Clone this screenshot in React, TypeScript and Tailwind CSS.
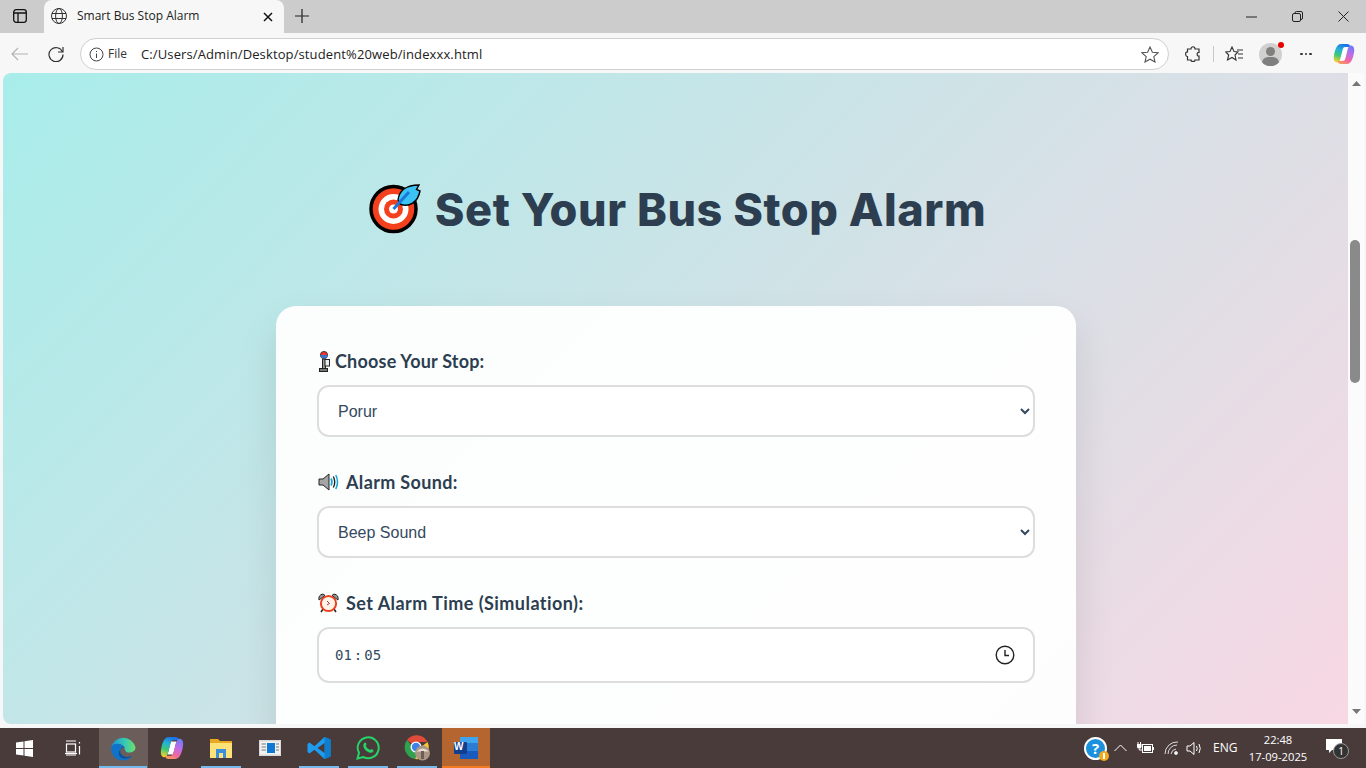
import React from "react";

const sans = "font-['Liberation_Sans',sans-serif]";
const ui = "font-['Open_Sans','Noto_Sans',sans-serif]";

function Target() {
  return (
    <svg width="52" height="52" viewBox="0 0 52 52" className="shrink-0">
      <circle cx="24.5" cy="26" r="22.5" fill="#f4401c" stroke="#000" strokeWidth="3.5" />
      <circle cx="24.5" cy="26" r="15" fill="#fff" />
      <circle cx="24.5" cy="26" r="9.5" fill="#f4401c" />
      <circle cx="24.5" cy="26" r="4.5" fill="#fff" />
      <path d="M29 17 C30 8 37 2 50 2 L47.5 6.5 L51 8 C49 19 40 25 31 21 Z" fill="#3cc3f5" stroke="#000" strokeWidth="1.4" />
      <path d="M24.5 26 L40 9" stroke="#1a78d8" strokeWidth="3" />
    </svg>
  );
}

function Pole() {
  return (
    <svg width="12" height="21" viewBox="0 0 12 21" className="shrink-0">
      <rect x="4.5" y="8" width="3" height="10" fill="#999" stroke="#222" strokeWidth="1" />
      <rect x="7" y="8.5" width="4.5" height="6.5" fill="#eee" stroke="#222" strokeWidth="1" />
      <rect x="1.5" y="17.5" width="8" height="3" fill="#777" stroke="#222" strokeWidth="1" />
      <circle cx="6" cy="4" r="3.6" fill="#e33" stroke="#222" strokeWidth="0.8" />
      <path d="M2.5 4 h7 a3.5 3.5 0 0 1 -7 0" fill="#37c" />
    </svg>
  );
}

function Speaker() {
  return (
    <svg width="21" height="18" viewBox="0 0 21 18" className="shrink-0">
      <path d="M1 6 H5 L11 1 V17 L5 12 H1 Z" fill="#a5a5a5" stroke="#222" strokeWidth="1" />
      <path d="M13 5.5 Q15 9 13 12.5" fill="none" stroke="#12a5d8" strokeWidth="1.6" />
      <path d="M15.3 3.5 Q18.2 9 15.3 14.5" fill="none" stroke="#222" strokeWidth="1.4" />
      <path d="M17.8 2 Q21.2 9 17.8 16" fill="none" stroke="#12a5d8" strokeWidth="1.5" />
    </svg>
  );
}

function AlarmClock() {
  return (
    <svg width="21" height="20" viewBox="0 0 21 20" className="shrink-0">
      <path d="M1 7 Q0 2 5 1 L7 2.5 Z" fill="#999" stroke="#222" strokeWidth="1" />
      <path d="M20 7 Q21 2 16 1 L14 2.5 Z" fill="#999" stroke="#222" strokeWidth="1" />
      <path d="M5 16 L3 19 M16 16 L18 19" stroke="#222" strokeWidth="1.5" />
      <circle cx="10.5" cy="10.5" r="7.6" fill="#fff4ea" stroke="#e8431f" strokeWidth="2" />
      <path d="M9 8 L11.5 10.5 L9 12" fill="none" stroke="#b33" strokeWidth="1" />
    </svg>
  );
}

function Copilot({ size, id }: { size: number; id: string }) {
  return (
    <svg width={size} height={size} viewBox="0 0 22 22">
      <defs>
        <linearGradient id={`${id}a`} x1="0.6" y1="0" x2="0.3" y2="1">
          <stop offset="0" stopColor="#1c70e6" />
          <stop offset="0.35" stopColor="#22b4d6" />
          <stop offset="0.65" stopColor="#3cc878" />
          <stop offset="1" stopColor="#f6d32a" />
        </linearGradient>
        <linearGradient id={`${id}b`} x1="0.7" y1="0" x2="0.3" y2="1">
          <stop offset="0" stopColor="#6f7cf5" />
          <stop offset="0.4" stopColor="#c06ce8" />
          <stop offset="0.75" stopColor="#f2679f" />
          <stop offset="1" stopColor="#f9985a" />
        </linearGradient>
      </defs>
      <path d="M10 5 H15 L12 17 H7 Z" fill="#fff" />
      <path d="M8 1 H14 C16 1 17 2 17.5 4 L12 4 C10.5 4 10 5 9.5 7 L7.5 15 C7 18 5.5 20 3.5 19.5 C1.5 19 0.5 17 0.8 14 C1.5 8 3.5 1 8 1 Z" fill={`url(#${id}a)`} />
      <path d="M14 21 H8 C6 21 5 20 4.5 18 L10 18 C11.5 18 12 17 12.5 15 L14.5 7 C15 4 16.5 2 18.5 2.5 C20.5 3 21.5 5 21.2 8 C20.5 14 18.5 21 14 21 Z" fill={`url(#${id}b)`} />
    </svg>
  );
}

function Field({ icon, label, gap, track, mb, children }: { icon: React.ReactNode; label: string; gap: string; track: string; mb: string; children: React.ReactNode }) {
  return (
    <div className={mb}>
      <div className={`flex items-center h-[24px] ml-[1px] mb-[12px] ${gap}`}>
        {icon}
        <span className={`font-['Lato',sans-serif] font-bold text-[18px] text-[#2c3e50] ${track}`}>{label}</span>
      </div>
      {children}
    </div>
  );
}

function Sel({ value }: { value: string }) {
  return (
    <select
      defaultValue={value}
      className={`block w-full h-[52px] pl-[15px] border-2 border-[#dddddd] rounded-[12px] bg-white text-[16px] text-[#34495e] ${sans} [appearance:auto]`}
    >
      <option>{value}</option>
    </select>
  );
}

function TabStrip() {
  return (
    <div className="h-[33px] bg-[#cccccc] flex shrink-0">
      <div className="w-[40px] h-[31px] flex items-center justify-center">
        <svg width="14" height="14" viewBox="0 0 14 14" fill="none" stroke="#111" strokeWidth="1.3">
          <rect x="0.7" y="0.7" width="12.6" height="12.6" rx="2.5" />
          <path d="M0.7 4 H13.3 M5 4 V13" />
        </svg>
      </div>
      <div className={`relative ml-[4px] w-[240px] h-[33px] bg-[#f7f7f7] rounded-t-[8px] flex items-center pl-[7px] pb-[2px] ${ui}`}>
        <svg width="16" height="16" viewBox="0 0 16 16" fill="none" stroke="#333" strokeWidth="1">
          <circle cx="8" cy="8" r="7.5" />
          <ellipse cx="8" cy="8" rx="3.4" ry="7.5" />
          <path d="M1 5.5 H15 M1 10.5 H15" />
        </svg>
        <span className="ml-[10px] text-[12px] text-[#222]">Smart Bus Stop Alarm</span>
        <svg width="10" height="10" viewBox="0 0 10 10" stroke="#111" strokeWidth="1.5" className="absolute right-[11px] top-[12px]">
          <path d="M1 1 L9 9 M9 1 L1 9" />
        </svg>
      </div>
      <div className="w-[36px] h-[31px] flex items-center justify-center">
        <svg width="14" height="14" viewBox="0 0 14 14" stroke="#222" strokeWidth="1.2"><path d="M7 0 V14 M0 7 H14" /></svg>
      </div>
      <div className="flex-1" />
      <div className="flex items-center h-[33px]">
        <div className="w-[46px] flex justify-center"><svg width="11" height="2" viewBox="0 0 11 2" stroke="#222"><path d="M0 1 H11" /></svg></div>
        <div className="w-[46px] flex justify-center">
          <svg width="11" height="11" viewBox="0 0 11 11" fill="none" stroke="#222"><rect x="0.5" y="2.5" width="8" height="8" rx="1.5" /><path d="M3 2.5 V2 a1.5 1.5 0 0 1 1.5 -1.5 H9 a1.5 1.5 0 0 1 1.5 1.5 V7 a1.5 1.5 0 0 1 -1.5 1.5" /></svg>
        </div>
        <div className="w-[46px] flex justify-center"><svg width="11" height="11" viewBox="0 0 11 11" stroke="#222"><path d="M0.5 0.5 L10.5 10.5 M10.5 0.5 L0.5 10.5" /></svg></div>
      </div>
    </div>
  );
}

function Toolbar() {
  return (
    <div className={`h-[40px] pt-[2px] bg-[#f7f7f7] flex items-center shrink-0 ${ui}`}>
      <div className="w-[39px] flex justify-center">
        <svg width="17" height="14" viewBox="0 0 17 14" fill="none" stroke="#b4b4b4" strokeWidth="1.2"><path d="M1 7 H17 M7 1 L1 7 L7 13" /></svg>
      </div>
      <div className="w-[34px] flex justify-center">
        <svg width="16" height="16" viewBox="0 0 16 16" fill="none" stroke="#333" strokeWidth="1.2"><path d="M14.5 6 A7 7 0 1 0 15 8.5" /><path d="M15 1 V6 H10" /></svg>
      </div>
      <div className="ml-[7px] w-[1089px] h-[32px] bg-white rounded-full border border-[#d0d0d0] flex items-center pl-[8px]">
        <svg width="15" height="15" viewBox="0 0 15 15" fill="none" stroke="#444" strokeWidth="1"><circle cx="7.5" cy="7.5" r="6.5" /><path d="M7.5 6.5 V11 M7.5 4 V5" /></svg>
        <span className="ml-[4px] text-[12px] font-medium text-[#333]">File</span>
        <span className="ml-[14px] mt-[1px] text-[13px] tracking-[0.12px] text-[#222]">C:/Users/Admin/Desktop/student%20web/indexxx.html</span>
        <div className="flex-1" />
        <svg width="18" height="17" viewBox="0 0 18 17" fill="none" stroke="#555" strokeWidth="1.1" className="mr-[9px]"><path d="M9 1 L11.4 6.2 L17 6.8 L12.8 10.6 L14 16 L9 13.2 L4 16 L5.2 10.6 L1 6.8 L6.6 6.2 Z" /></svg>
      </div>
      <div className="w-[44px] pl-[4px] pr-[1px] flex justify-center">
        <svg width="16" height="16" viewBox="0 0 16 16" fill="none" stroke="#333" strokeWidth="1.2"><path d="M6 3 C6 0 10 0 10 3 H14 V6.5 C11.5 6 11.5 10.5 14 10 V14 H10 C10.5 16 5.5 16 6 14 H2.5 V10.5 C0 10.5 0 5.5 2.5 6 V3 Z" /></svg>
      </div>
      <div className="w-px h-[16px] bg-[#c8c8c8]" />
      <div className="w-[40px] flex justify-center">
        <svg width="18" height="16" viewBox="0 0 18 16" fill="none" stroke="#333" strokeWidth="1.1"><path d="M7 1 L9 5.5 L13 6 L10 9 L11 14 L7 11.5 L2.5 14 L3.7 9 L0.7 6 L5 5.5 Z" /><path d="M12 4 H18 M13 8 H18 M13 12 H18" /></svg>
      </div>
      <div className="relative w-[32px] flex justify-center">
        <div className="w-[23px] h-[23px] rounded-full bg-[#d2d0ce] overflow-hidden relative">
          <div className="absolute left-[7px] top-[4px] w-[9px] h-[9px] rounded-full bg-[#7f7f7f]" />
          <div className="absolute left-[3px] top-[14px] w-[17px] h-[12px] rounded-full bg-[#7f7f7f]" />
        </div>
        <div className="absolute right-[2px] top-[-1px] w-[6px] h-[6px] rounded-full bg-[#e60000]" />
      </div>
      <div className="w-[40px] flex justify-center gap-[2px]">
        <i className="block w-[2.5px] h-[2.5px] rounded-full bg-[#333]" />
        <i className="block w-[2.5px] h-[2.5px] rounded-full bg-[#333]" />
        <i className="block w-[2.5px] h-[2.5px] rounded-full bg-[#333]" />
      </div>
      <div className="w-[35px] flex justify-center">
        <Copilot size={22} id="cpa" />
      </div>
    </div>
  );
}

function Scrollbar() {
  return (
    <div className="w-[16px] bg-[#fbfbfb] shrink-0 flex flex-col items-center justify-between pt-[8px] pb-[10px] relative">
      <svg width="9" height="5" viewBox="0 0 9 5" fill="#777"><path d="M4.5 0 L9 5 H0 Z" /></svg>
      <div className="absolute left-[2px] top-[167px] w-[10px] h-[143px] rounded-full bg-[#8a8a8a]" />
      <svg width="9" height="5" viewBox="0 0 9 5" fill="#777"><path d="M4.5 5 L9 0 H0 Z" /></svg>
    </div>
  );
}

function Page() {
  return (
    <div className="h-[655px] bg-[#f7f7f7] flex shrink-0 pl-[3px] pr-[2px] pb-[4px]">
      <main className="flex-1 overflow-hidden rounded-tl-[8px] rounded-bl-[8px] bg-[linear-gradient(135deg,#a8edea_0%,#fed6e3_108%)] flex flex-col items-center">
        <div className="mt-[110px] shrink-0 flex items-center justify-center gap-[14px] h-[52px] ml-[4px]">
          <Target />
          <h1 className="font-['Inter',sans-serif] font-extrabold text-[45px] leading-none tracking-[0.54px] text-[#2c3e50] whitespace-nowrap">Set Your Bus Stop Alarm</h1>
        </div>
        <div className="mt-[71px] ml-[1px] w-[800px] shrink-0 h-[600px] rounded-[20px] bg-white/95 shadow-[0_20px_40px_rgba(0,0,0,0.1)] px-[41px] pt-[43px]">
          <Field icon={<Pole />} label="Choose Your Stop:" gap="gap-[5px]" track="tracking-[0.2px]" mb="mb-[33px]">
            <Sel value="Porur" />
          </Field>
          <Field icon={<Speaker />} label="Alarm Sound:" gap="gap-[7px]" track="tracking-[0.35px]" mb="mb-[33px]">
            <Sel value="Beep Sound" />
          </Field>
          <Field icon={<AlarmClock />} label="Set Alarm Time (Simulation):" gap="gap-[7px]" track="tracking-[0.45px]" mb="">
            <div className="h-[56px] border-2 border-[#dddddd] rounded-[12px] bg-white flex items-center pl-[16px] pr-[18px]">
              <span className="mt-[1px] font-['DejaVu_Sans_Mono',monospace] text-[14px] text-[#34495e] whitespace-pre">01<span className="mx-[2px]">:</span>05</span>
              <div className="flex-1" />
              <svg width="20" height="20" viewBox="0 0 20 20" fill="none" stroke="#222" strokeWidth="1.4" className="-mt-[1px]"><circle cx="10" cy="10" r="8.8" /><path d="M10 5 V10.5 H14" /></svg>
            </div>
          </Field>
        </div>
      </main>
      <Scrollbar />
    </div>
  );
}

function Tb({ active, line, bg, children }: { active?: boolean; line?: string; bg?: string; children: React.ReactNode }) {
  return (
    <div className={`relative w-[49px] h-[40px] pr-[1px] flex items-center justify-center ${bg ?? ""}`}>
      {children}
      {line ? <div className={`absolute bottom-0 h-[2px] ${active ? "left-0 right-[1px]" : "left-[4px] right-[5px]"} ${line}`} /> : null}
    </div>
  );
}

function Taskbar() {
  return (
    <div className="h-[40px] bg-[#4a3b3b] flex items-center shrink-0">
      <div className="w-[48px] flex justify-center">
        <svg width="17" height="17" viewBox="0 0 17 17" fill="#fff"><path d="M0 2.5 L7.5 1.4 V8 H0 Z M8.5 1.2 L17 0 V8 H8.5 Z M0 9 H7.5 V15.6 L0 14.5 Z M8.5 9 H17 V17 L8.5 15.8 Z" /></svg>
      </div>
      <div className="w-[51px] flex justify-center">
        <svg width="18" height="16" viewBox="0 0 18 16" fill="none" stroke="#fff" strokeWidth="1.2"><path d="M1 1 H11 M1 15 H11" /><rect x="1.5" y="4" width="9" height="8" /><path d="M14.5 2 V3.5 M14.5 6 V14.5" /><path d="M0 13.5 H12" /></svg>
      </div>
      <Tb active line="bg-[#76b9ed]" bg="bg-[#6b5d5a]">
        <svg width="26" height="26" viewBox="0 0 26 26">
          <defs>
            <linearGradient id="e1" x1="0" y1="0.5" x2="1" y2="0.5"><stop offset="0" stopColor="#1b8ed8" /><stop offset="0.55" stopColor="#35c8b4" /><stop offset="1" stopColor="#6fe06a" /></linearGradient>
          </defs>
          <path d="M1 13 A12.5 12.5 0 0 1 25.5 12.5 C25.5 16.5 21 18 18 17.5 C15 17 14.5 14 14.5 12 C11 8 3 8 1 13 Z" fill="url(#e1)" />
          <path d="M1 13 C2 8 10 7 14.5 12 C11 12 9.5 15 10.5 18 C11.5 21 16 23.5 22 21 C19.5 24.5 16 25.5 13 25.5 C6 25.5 1 20 1 13 Z" fill="#1173c8" />
          <path d="M14.5 12 C11 12 9.5 15 10.5 18 C11.5 21 16 23.5 22 21 C19 24 13 24.5 10 21.5 C8 19 8.5 14 14.5 12 Z" fill="#0b4f9a" />
        </svg>
      </Tb>
      <Tb>
        <Copilot size={24} id="cpb" />
      </Tb>
      <Tb line="bg-[#76b9ed]">
        <svg width="22" height="20" viewBox="0 0 22 20">
          <path d="M0 1 H8 L10 3 H22 V20 H0 Z" fill="#e8a820" />
          <path d="M0 5 H22 V20 H0 Z" fill="#fde27a" />
          <path d="M6 11 H16 V20 H13 V15 H9 V20 H6 Z" fill="#3a8fdc" />
        </svg>
      </Tb>
      <Tb>
        <svg width="22" height="16" viewBox="0 0 22 16">
          <rect width="22" height="16" fill="#d8d8d8" />
          <rect x="1" y="1.5" width="20" height="13" fill="#f2f2f2" />
          <rect x="8" y="3" width="8" height="10" fill="#0f78d4" />
          <path d="M2.5 4 H7 M2.5 7 H7 M2.5 10 H7 M17 4 H20 M17 7 H20 M17 10 H20" stroke="#777" />
        </svg>
      </Tb>
      <Tb line="bg-[#76b9ed]">
        <svg width="24" height="24" viewBox="0 0 24 24">
          <path d="M17.5 1 L23.5 3.5 V20.5 L17.5 23 L7.5 13.7 L2.5 17.5 L0.5 16 V8 L2.5 6.5 L7.5 10.3 Z" fill="#1f9cf0" />
          <path d="M17.5 1 L23.5 3.5 V20.5 L17.5 23 Z" fill="#0e7fd0" />
          <path d="M17.5 7 L10.5 12 L17.5 17 Z" fill="#4a3b3b" />
        </svg>
      </Tb>
      <Tb line="bg-[#76b9ed]">
        <svg width="24" height="24" viewBox="0 0 24 24" fill="none">
          <path d="M1.5 22.5 L3 16.8 A10.5 10.5 0 1 1 7.2 21 Z" stroke="#25d366" strokeWidth="2" />
          <path d="M8 7.2 C9 6 10 6.5 10.4 8 C10.7 9 9.6 9.5 9.8 10 C10.5 11.5 12 13 13.8 13.8 C14.4 14 15 13 15.8 13.2 C17 13.6 18 14.4 17.3 15.6 C16 17.5 13 17 10.5 15 C8 13 6.3 9.5 8 7.2 Z" fill="#25d366" />
        </svg>
      </Tb>
      <Tb line="bg-[#76b9ed]">
        <svg width="26" height="26" viewBox="0 0 26 26">
          <path d="M12 12 L3 5 A12 12 0 0 1 23.5 7 H12 Z" fill="#e14b3a" />
          <path d="M3 5 A12 12 0 0 0 11 24 L16 15 L12 16 Z" fill="#2ea24f" />
          <path d="M23.5 7 A12 12 0 0 1 11 24 L17 12 Z" fill="#f7c92e" />
          <circle cx="12" cy="12" r="5.5" fill="#fff" />
          <circle cx="12" cy="12" r="4.2" fill="#3f83ea" />
          <circle cx="18.5" cy="18" r="7.5" fill="#a99686" />
          <path d="M12.5 16.5 Q18.5 10.5 25 16.5 Z" fill="#e8ddd0" />
          <rect x="17" y="16" width="3" height="8" fill="#6d5d50" />
        </svg>
      </Tb>
      <div className="relative w-[48px] h-[40px] bg-[#b5652f] flex items-center justify-center">
        <svg width="25" height="24" viewBox="0 0 25 24">
          <rect x="6" y="1" width="18" height="22" rx="1.5" fill="#2b7cd3" />
          <rect x="6" y="1" width="18" height="6" fill="#41a5ee" />
          <rect x="6" y="15" width="18" height="8" fill="#185abd" />
          <rect x="0" y="6" width="13" height="12" rx="1" fill="#103f91" />
        </svg>
        <span className={`absolute left-[12px] top-[13px] text-white text-[10px] font-bold leading-[12px] ${sans}`}>W</span>
        <div className="absolute bottom-0 left-0 right-0 h-[2px] bg-[#f47b20]" />
      </div>
      <div className="flex-1" />
      <div className={`flex items-center h-[40px] text-white ${ui}`}>
        <div className="relative w-[23px] h-[23px] rounded-full bg-[#1b90dd] border-2 border-white flex items-center justify-center mr-[7px]">
          <span className="text-white text-[15px] font-bold leading-none">?</span>
          <div className="absolute -right-[4px] -bottom-[3px] w-[10px] h-[10px] rounded-full bg-[#f4a81c] flex items-center justify-center">
            <i className="block w-[2px] h-[6px] bg-white" />
          </div>
        </div>
        <svg width="13" height="8" viewBox="0 0 13 8" fill="none" stroke="#fff" strokeWidth="1"><path d="M0.5 7 L6.5 1 L12.5 7" /></svg>
        <svg width="17" height="12" viewBox="0 0 17 12" className="ml-[10px]" fill="#fff">
          <path d="M1 0 V2 M3.5 0 V2" stroke="#fff" />
          <path d="M0 2 H4.5 V5 Q4.5 6.5 2.25 6.5 Q0 6.5 0 5 Z" />
          <path d="M2.25 6.5 V8 H5" fill="none" stroke="#fff" />
          <rect x="5.5" y="2.5" width="10" height="8" fill="none" stroke="#fff" />
          <rect x="7" y="4" width="7" height="5" />
          <rect x="16" y="5" width="1" height="3" />
        </svg>
        <svg width="15" height="14" viewBox="0 0 15 14" className="ml-[10px]" fill="none" stroke="#ddd" strokeWidth="1"><path d="M1 13 A12 12 0 0 1 14 1 M4 13 A9 9 0 0 1 13 4 M7 13 A6 6 0 0 1 12 8" /><circle cx="12" cy="12" r="1.5" fill="#fff" /></svg>
        <svg width="17" height="15" viewBox="0 0 17 15" className="ml-[7px]" fill="none" stroke="#fff" strokeWidth="1"><path d="M1 5 H4 L8 1.5 V13.5 L4 10 H1 Z M10.5 5 Q12 7.5 10.5 10 M13 3 Q15.5 7.5 13 12" /></svg>
        <span className="ml-[10px] text-[12px] w-[32px]">ENG</span>
        <div className="w-[66px] text-center text-[11.2px] leading-[17px] text-white">
          <div>22:48</div>
          <div>17-09-2025</div>
        </div>
        <div className="relative w-[55px] h-[40px] flex items-center justify-center">
          <svg width="18" height="16" viewBox="0 0 18 16" className="-ml-[9px] -mt-[4px]" fill="#fff"><path d="M1 1 H17 V12 H7 L4 15 V12 H1 Z" /></svg>
          <div className="absolute left-[22px] top-[15px] w-[16px] h-[16px] rounded-full bg-[#333] border border-[#999] flex items-center justify-center text-[10px] leading-none">1</div>
        </div>
      </div>
    </div>
  );
}

export default function App() {
  return (
    <div className="w-[1366px] h-[768px] overflow-hidden flex flex-col bg-[#f7f7f7]">
      <TabStrip />
      <Toolbar />
      <Page />
      <Taskbar />
    </div>
  );
}
